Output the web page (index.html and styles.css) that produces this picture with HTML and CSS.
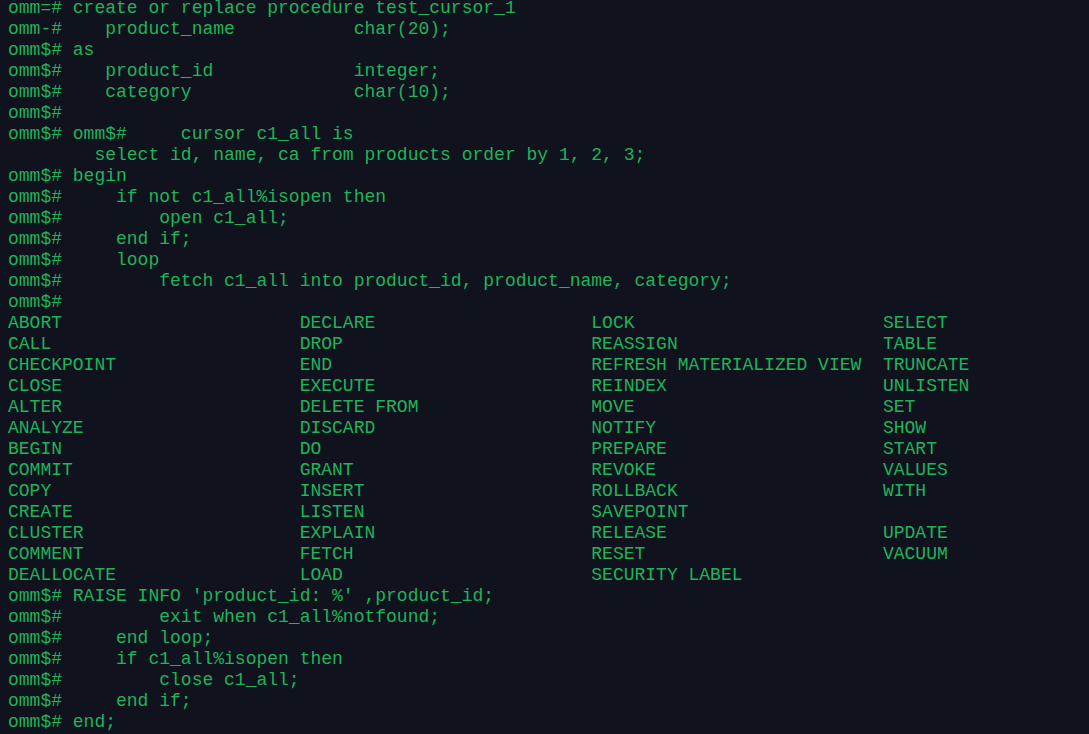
FILE: index.html
```html
<!DOCTYPE html>
<html>
<head>
<meta charset="utf-8">
<link rel="stylesheet" href="styles.css">
</head>
<body>
<div class="term">
<pre class="out">omm=# create or replace procedure test_cursor_1
omm-#    product_name           char(20);
omm$# as
omm$#    product_id             integer;
omm$#    category               char(10);
omm$#
omm$# omm$#     cursor c1_all is
        select id, name, ca from products order by 1, 2, 3;
omm$# begin
omm$#     if not c1_all%isopen then
omm$#         open c1_all;
omm$#     end if;
omm$#     loop
omm$#         fetch c1_all into product_id, product_name, category;
omm$#</pre>
<div class="completions">
<span>ABORT</span><span>DECLARE</span><span>LOCK</span><span>SELECT</span>
<span>CALL</span><span>DROP</span><span>REASSIGN</span><span>TABLE</span>
<span>CHECKPOINT</span><span>END</span><span>REFRESH MATERIALIZED VIEW</span><span>TRUNCATE</span>
<span>CLOSE</span><span>EXECUTE</span><span>REINDEX</span><span>UNLISTEN</span>
<span>ALTER</span><span>DELETE FROM</span><span>MOVE</span><span>SET</span>
<span>ANALYZE</span><span>DISCARD</span><span>NOTIFY</span><span>SHOW</span>
<span>BEGIN</span><span>DO</span><span>PREPARE</span><span>START</span>
<span>COMMIT</span><span>GRANT</span><span>REVOKE</span><span>VALUES</span>
<span>COPY</span><span>INSERT</span><span>ROLLBACK</span><span>WITH</span>
<span>CREATE</span><span>LISTEN</span><span>SAVEPOINT</span><span></span>
<span>CLUSTER</span><span>EXPLAIN</span><span>RELEASE</span><span>UPDATE</span>
<span>COMMENT</span><span>FETCH</span><span>RESET</span><span>VACUUM</span>
<span>DEALLOCATE</span><span>LOAD</span><span>SECURITY LABEL</span><span></span>
</div>
<pre class="out">omm$# RAISE INFO 'product_id: %' ,product_id;
omm$#         exit when c1_all%notfound;
omm$#     end loop;
omm$#     if c1_all%isopen then
omm$#         close c1_all;
omm$#     end if;
omm$# end;</pre>
</div>
</body>
</html>
```
FILE: styles.css
```css
html, body {
  margin: 0;
  padding: 0;
  background: #10121e;
  height: 100%;
  overflow: hidden;
}
.term {
  padding: 0 8px;
  font-family: "Courier New", "Nimbus Mono PS", "Nimbus Mono L", "FreeMono", "Liberation Mono", monospace;
  font-size: 18px;
  line-height: 21px;
  color: #1eb45a;
  margin-top: -2px;
}
.out {
  margin: 0;
  font: inherit;
  white-space: pre;
}
.completions {
  display: grid;
  grid-template-columns: repeat(3, 27ch) auto;
}
.completions span {
  white-space: pre;
  height: 21px;
}
```
